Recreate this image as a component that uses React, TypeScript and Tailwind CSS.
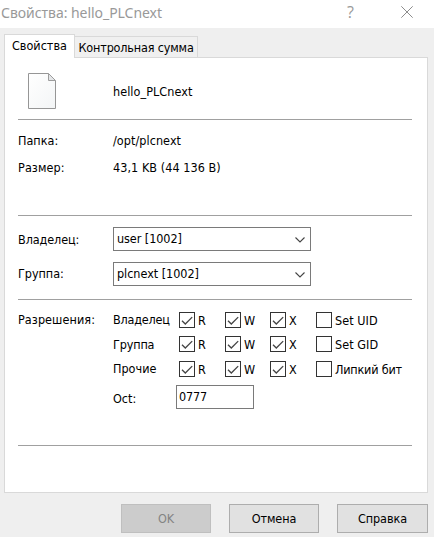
import React from 'react';

function Text({ className = '', children }: { className?: string; children: React.ReactNode }) {
  return <span className={`block whitespace-nowrap leading-4 ${className}`}>{children}</span>;
}

function Rule() {
  return <div className="h-px w-full shrink-0 bg-[#a0a0a0]" />;
}

function FileIcon() {
  return (
    <svg width="28" height="36" viewBox="0 0 28 36" className="block">
      <defs>
        <linearGradient id="sheet" x1="0" y1="0" x2="1" y2="1">
          <stop offset="0" stopColor="#ffffff" />
          <stop offset="1" stopColor="#f3f5f6" />
        </linearGradient>
      </defs>
      <path d="M.5.5h19.8l7.2 7.2v27.8H.5z" fill="url(#sheet)" stroke="#969696" />
      <path d="M20.5.5v7h7z" fill="#e4e6e8" stroke="#9c9c9c" />
    </svg>
  );
}

function Combo({ value, className }: { value: string; className: string }) {
  return (
    <div className="flex h-6 w-[198px] justify-between border border-[#7a7a7a] bg-white pl-[3px]">
      <Text className={`mt-[3px] ${className}`}>{value}</Text>
      <svg width="10" height="6" viewBox="0 0 10 6" className="mt-[9px] mr-[5px]">
        <path d="M.5.5 5 5 9.5.5" fill="none" stroke="#444" strokeWidth="1.1" />
      </svg>
    </div>
  );
}

function Check({ label, checked = false, className }: { label: string; checked?: boolean; className: string }) {
  return (
    <div className={`flex gap-[3px] ${className}`}>
      <span className="block size-4 shrink-0 border border-[#333] bg-white">
        {checked && (
          <svg width="14" height="14" viewBox="0 0 14 14" className="block">
            <path d="M2 7.7 5.3 11 12.2 4.1" fill="none" stroke="#444" strokeWidth="1.3" />
          </svg>
        )}
      </span>
      <Text className="mt-px">{label}</Text>
    </div>
  );
}

function PermissionRow({ extra, extraClass }: { extra: string; extraClass: string }) {
  return (
    <div className="flex">
      <Check label="R" checked className="w-[46px]" />
      <Check label="W" checked className="w-[45px]" />
      <Check label="X" checked className="w-[46px]" />
      <Check label={extra} className={extraClass} />
    </div>
  );
}

export default function App() {
  return (
    <div className="flex h-[537px] w-[434px] flex-col overflow-hidden bg-[#efefef] font-['DejaVu_Sans_Condensed','DejaVu_Sans',sans-serif] text-[12.5px] text-black">
      <header className="flex h-7 shrink-0 justify-between bg-white pl-px text-[#999]">
        <span className="mt-[3px] block font-['Noto_Sans',sans-serif] text-[14px] leading-5 tracking-[-0.04px] whitespace-nowrap">
          Свойства: hello_PLCnext
        </span>
        <div className="flex pr-[21px]">
          <span className="mt-[2px] mr-[47px] block font-['Open_Sans',sans-serif] text-[16px] leading-5">?</span>
          <svg width="12" height="12" viewBox="0 0 12 12" className="mt-[6px]">
            <path d="M.3.3l11.4 11.4M11.7.3.3 11.7" stroke="#8c8c8c" strokeWidth="1" />
          </svg>
        </div>
      </header>

      <nav className="z-10 mt-[6px] ml-1 flex h-6 shrink-0">
        <div className="w-[71px] border border-b-0 border-[#d9d9d9] bg-white pl-[7px]">
          <Text className="mt-[3px]">Свойства</Text>
        </div>
        <div className="mt-[2px] h-[21px] w-[123px] border border-b-0 border-l-0 border-[#d9d9d9] bg-[#f0f0f0] pl-[3.5px]">
          <Text className="mt-[3px] tracking-[-0.16px]">Контрольная сумма</Text>
        </div>
      </nav>

      <main className="-mt-px ml-1 flex h-[436px] w-[424px] shrink-0 flex-col border border-[#d9d9d9] bg-white pr-[15px] pl-[13px]">
        <section className="flex h-[61px] shrink-0">
          <div className="w-[95px] pt-[15px] pl-[10px]">
            <FileIcon />
          </div>
          <Text className="mt-[26px] tracking-[0.06px]">hello_PLCnext</Text>
        </section>
        <Rule />
        <section className="h-[95px] shrink-0 pt-[13px]">
          <div className="flex h-[27px]">
            <Text className="w-[95px]">Папка:</Text>
            <Text className="tracking-[0.06px]">/opt/plcnext</Text>
          </div>
          <div className="flex">
            <Text className="w-[95px] tracking-[0.1px]">Размер:</Text>
            <Text className="tracking-[0.06px]">43,1 KB (44 136 B)</Text>
          </div>
        </section>
        <Rule />
        <section className="flex h-[83px] shrink-0 flex-col gap-[11px] pt-[11px]">
          <div className="flex">
            <Text className="mt-[5px] w-[95px] tracking-[-0.08px]">Владелец:</Text>
            <Combo value="user [1002]" className="tracking-[-0.06px]" />
          </div>
          <div className="flex">
            <Text className="mt-1 w-[95px] tracking-[-0.04px]">Группа:</Text>
            <Combo value="plcnext [1002]" className="tracking-[-0.03px]" />
          </div>
        </section>
        <Rule />
        <section className="flex h-[145px] shrink-0 pt-3">
          <Text className="w-[95px] tracking-[0.08px]">Разрешения:</Text>
          <div>
            <div className="flex h-6">
              <Text className="w-[66px] tracking-[-0.18px]">Владелец</Text>
              <PermissionRow extra="Set UID" extraClass="tracking-[0.06px]" />
            </div>
            <div className="flex h-[25px]">
              <Text className="mt-px w-[66px] tracking-[-0.15px]">Группа</Text>
              <PermissionRow extra="Set GID" extraClass="tracking-[0.06px]" />
            </div>
            <div className="flex h-6">
              <Text className="w-[66px]">Прочие</Text>
              <PermissionRow extra="Липкий бит" extraClass="tracking-[-0.2px]" />
            </div>
            <div className="flex">
              <Text className="mt-[6px] w-[63px]">Oct:</Text>
              <div className="h-6 w-[78px] border border-[#7a7a7a] bg-white pl-[2px]">
                <Text className="mt-[3px] tracking-[-0.15px]">0777</Text>
              </div>
            </div>
          </div>
        </section>
        <Rule />
      </main>

      <footer className="mt-[11px] ml-[121px] flex h-[29px] shrink-0 gap-[18px] text-center">
        <div className="w-[90px] border border-[#bfbfbf] bg-[#cccccc] pt-[6px] text-[#838383]">
          <Text>OK</Text>
        </div>
        <div className="w-[90px] border border-[#adadad] bg-[#e1e1e1] pt-[6px]">
          <Text className="tracking-[-0.12px]">Отмена</Text>
        </div>
        <div className="w-[91px] border border-[#adadad] bg-[#e1e1e1] pt-[6px]">
          <Text className="tracking-[-0.05px]">Справка</Text>
        </div>
      </footer>
    </div>
  );
}
